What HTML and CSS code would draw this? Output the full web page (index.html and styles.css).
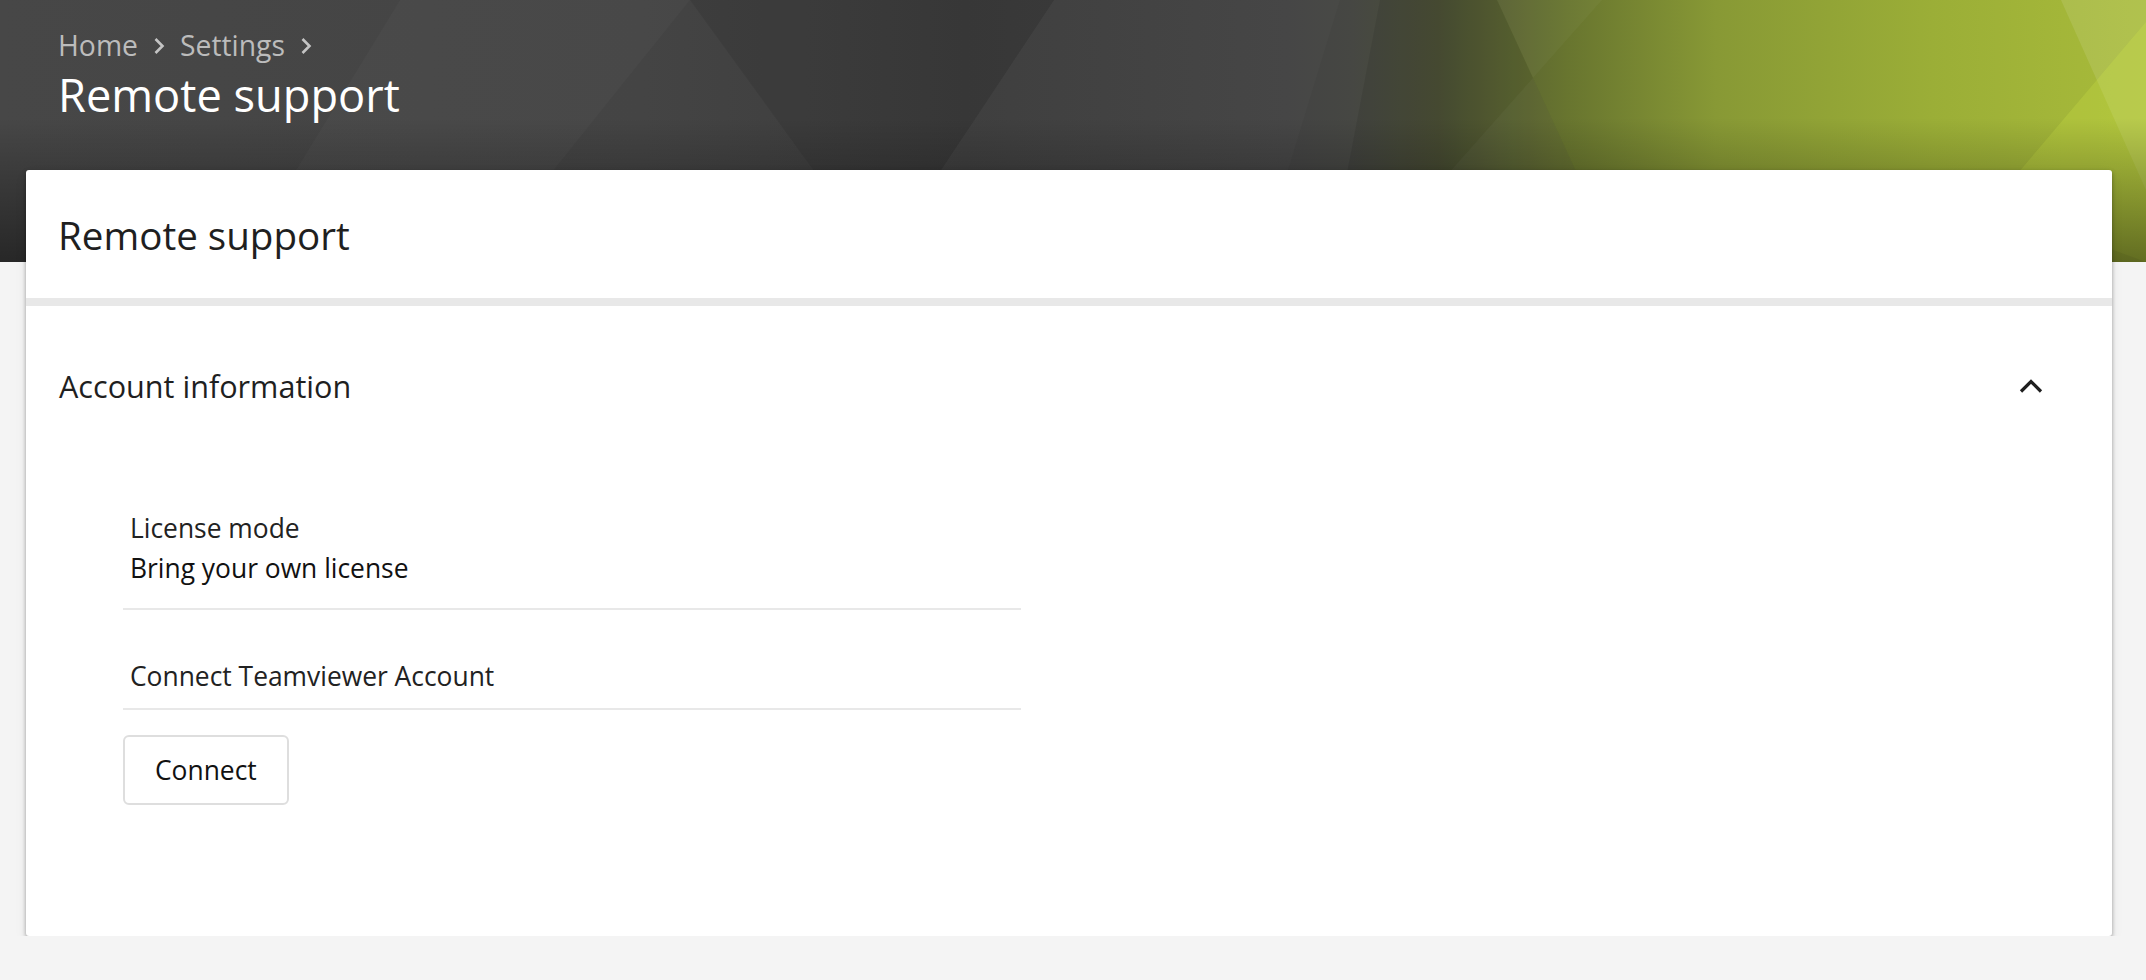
FILE: index.html
```html
<!DOCTYPE html>
<html lang="en">

<head>
    <meta charset="UTF-8">
    <meta name="viewport" content="width=device-width, initial-scale=1.0">
    <title>Remote support</title>
    <link rel="stylesheet" href="styles.css">
</head>

<body>

    <div class="hero">
        <svg class="hero-bg" viewBox="0 0 2146 262" preserveAspectRatio="none">
            <defs>
                <linearGradient id="base" x1="0" y1="0" x2="1" y2="0">
                    <stop offset="0" stop-color="#474747" />
                    <stop offset="0.3" stop-color="#444444" />
                    <stop offset="0.45" stop-color="#3c3c3c" />
                    <stop offset="0.6" stop-color="#434343" />
                    <stop offset="0.63" stop-color="#464743" />
                    <stop offset="0.67" stop-color="#4b5036" />
                    <stop offset="0.73" stop-color="#68752f" />
                    <stop offset="0.8" stop-color="#889935" />
                    <stop offset="0.9" stop-color="#9bae37" />
                    <stop offset="1" stop-color="#a8bb3a" />
                </linearGradient>
                <linearGradient id="shade" x1="0" y1="0" x2="0" y2="1">
                    <stop offset="0.45" stop-color="#000" stop-opacity="0" />
                    <stop offset="1" stop-color="#000" stop-opacity="0.45" />
                </linearGradient>
            </defs>
            <rect width="2146" height="262" fill="url(#base)" />
            <!-- facets -->
            <polygon points="400,0 690,0 480,262 240,262" fill="#fff" fill-opacity="0.025" />
            <polygon points="690,0 1054,0 880,262" fill="#000" fill-opacity="0.08" />
            <polygon points="1054,0 1340,0 1260,262 880,262" fill="#fff" fill-opacity="0.02" />
            <polygon points="1380,0 1497,0 1618,262 1330,262" fill="#000" fill-opacity="0.08" />
            <polygon points="1497,0 1602,0 1370,262 1618,262" fill="#fff" fill-opacity="0.03" />
            <polygon points="2061,0 2146,0 2146,190" fill="#fff" fill-opacity="0.1" />
            <polygon points="2146,22 1991,205 2146,262" fill="#d4ec48" fill-opacity="0.22" />
            <rect width="2146" height="262" fill="url(#shade)" />
        </svg>

        <div class="hero-content">
            <nav class="breadcrumb">
                <span>Home</span>
                <svg class="crumb-sep" viewBox="0 0 12 18"><path d="M2.5 2 L9.5 9 L2.5 16" /></svg>
                <span>Settings</span>
                <svg class="crumb-sep" viewBox="0 0 12 18"><path d="M2.5 2 L9.5 9 L2.5 16" /></svg>
            </nav>
            <h1 class="page-title">Remote support</h1>
        </div>
    </div>

    <div class="card">
        <div class="card-head">
            <h2>Remote support</h2>
        </div>

        <div class="section">
            <div class="section-head">
                <h3>Account information</h3>
                <svg class="collapse-icon" viewBox="0 0 24 14"><path d="M2 12.5 L12 2.5 L22 12.5" /></svg>
            </div>

            <div class="fields">
                <div class="field first">
                    <div class="field-label">License mode</div>
                    <div class="field-value">Bring your own license</div>
                </div>
                <div class="field second">
                    <div class="field-label">Connect Teamviewer Account</div>
                </div>
                <button class="connect-btn">Connect</button>
            </div>
        </div>
    </div>

</body>

</html>
```

FILE: styles.css
```css
body {
    margin: 0;
    font-family: "Open Sans", "Noto Sans", sans-serif;
    background: #f4f4f4;
    color: #222;
}

.hero {
    position: relative;
    height: 262px;
    box-sizing: border-box;
    padding: 27px 58px 0;
    overflow: hidden;
}

.hero-bg {
    position: absolute;
    top: 0;
    left: 0;
    width: 100%;
    height: 100%;
}

.hero-content {
    position: relative;
}

.breadcrumb {
    display: flex;
    align-items: center;
    gap: 15px;
    font-size: 28.3px;
    line-height: 36px;
    color: #bcbcbc;
}

.crumb-sep {
    width: 12px;
    height: 18px;
    margin-top: 2px;
}

.crumb-sep path {
    fill: none;
    stroke: #c4c4c4;
    stroke-width: 2.6;
}

.page-title {
    margin: 6px 0 0;
    font-size: 45.2px;
    line-height: 52px;
    font-weight: 400;
    color: #fff;
}

.card {
    position: relative;
    margin: -92px 34px 0 26px;
    background: #fff;
    border-radius: 3px;
    box-shadow: 0 2px 4px rgba(0, 0, 0, 0.35), 0 5px 14px rgba(0, 0, 0, 0.06);
}

.card-head {
    padding: 41px 32px 39px;
    border-bottom: 8px solid #e8e8e8;
}

.card-head h2 {
    margin: 0;
    font-size: 38.6px;
    line-height: 48px;
    font-weight: 400;
    color: #1f1f1f;
}

.section {
    padding: 60px 32px 131px 33px;
}

.section-head {
    display: flex;
    justify-content: space-between;
    align-items: center;
}

.section-head h3 {
    margin: 0;
    font-size: 30.6px;
    line-height: 40px;
    font-weight: 400;
    color: #1f1f1f;
}

.collapse-icon {
    width: 24px;
    height: 14px;
    margin-right: 37px;
}

.collapse-icon path {
    fill: none;
    stroke: #1f1f1f;
    stroke-width: 3.2;
}

.fields {
    width: 898px;
    margin: 102px 0 0 64px;
}

.field {
    font-size: 26.4px;
    line-height: 40px;
    border-bottom: 2px solid #e8e8e8;
}

.field.first {
    padding: 0 7px 20px;
}

.field.second {
    padding: 46px 7px 12px;
}

.field-label {
    color: #222;
}

.field-value {
    color: #111;
}

.connect-btn {
    margin-top: 25px;
    padding: 13px 30px;
    font-family: "Open Sans", "Noto Sans", sans-serif;
    font-size: 26.4px;
    line-height: 40px;
    color: #111;
    background: #fff;
    border: 2px solid #dedede;
    border-radius: 6px;
    cursor: pointer;
}
```
